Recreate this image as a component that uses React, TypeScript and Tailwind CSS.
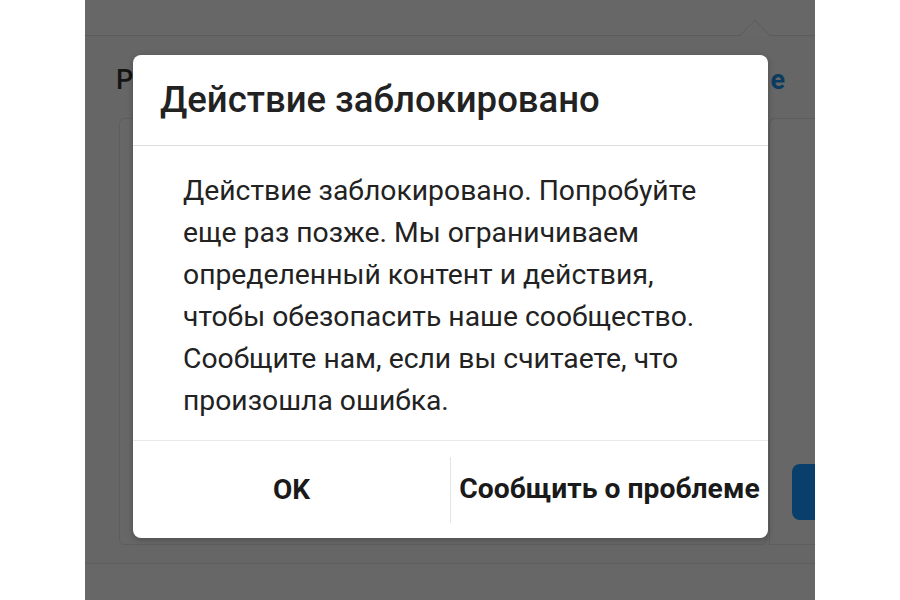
const bodyLines = [
  'Действие заблокировано. Попробуйте',
  'еще раз позже. Мы ограничиваем',
  'определенный контент и действия,',
  'чтобы обезопасить наше сообщество.',
  'Сообщите нам, если вы считаете, что',
  'произошла ошибка.',
]

export default function App() {
  return (
    <div
      className="flex h-[600px] w-[900px] bg-white"
      style={{ fontFamily: 'Roboto, "Noto Sans", sans-serif' }}
    >
      <div className="w-[85px] shrink-0 bg-white" />

      {/* dimmed page behind the dialog */}
      <div className="relative flex w-[730px] shrink-0 flex-col overflow-hidden bg-[#666666]">
        <div className="relative h-[36px] shrink-0 border-b border-[#5c5c5c] bg-[#676767]">
          <svg className="absolute left-[654px] top-[18px]" width="32" height="19" viewBox="0 0 32 19">
            <path d="M0 18.5 L16 2 L32 18.5" fill="#676767" stroke="#5c5c5c" strokeWidth="1" />
          </svg>
        </div>

        <div className="flex h-[82px] shrink-0 items-start justify-between pl-[31px] pr-[30px] pt-[30px]">
          <span className="text-[27px] font-medium leading-[28px] text-[#141414]">Р</span>
          <span className="text-[27px] font-bold leading-[28px] text-[#0b3c60]">е</span>
        </div>

        <div className="flex h-[427px] shrink-0 gap-[2px] pl-[34px]">
          <div className="flex-1 rounded-[6px] border border-[#5d5d5d] bg-[#676767]" />
          <div className="flex w-[46px] items-end rounded-tl-[6px] border border-r-0 border-[#5d5d5d] bg-[#676767] pb-[24px] pl-[22px]">
            <div className="h-[56px] w-[30px] rounded-l-[8px] bg-[#0b3f6b]" />
          </div>
        </div>

        <div className="mt-[18px] flex-1 border-t border-[#5d5d5d] bg-[#676767]" />

        {/* dialog */}
        <div className="absolute left-[48px] top-[55px] flex h-[483px] w-[635px] flex-col overflow-hidden rounded-[8px] bg-white shadow-[0_2px_6px_rgba(0,0,0,0.25)]">
          <div className="flex h-[91px] shrink-0 items-center border-b border-[#dcdcdc] pl-[27px]">
            <h1 className="text-[36.5px] font-medium leading-none text-[#222222]">Действие заблокировано</h1>
          </div>

          <div className="flex flex-1 items-center pl-[50px] pt-[6px]">
            <p className="text-[28.3px] leading-[42px] text-[#222222]">
              {bodyLines.map(line => (
                <span key={line} className="block whitespace-nowrap">{line}</span>
              ))}
            </p>
          </div>

          <div className="flex h-[98px] shrink-0 items-center border-t border-[#e8e8e8]">
            <button className="flex h-full w-[317px] items-center justify-center text-[28px] font-bold text-[#1a1a1a]">
              OK
            </button>
            <div className="h-[66px] w-px bg-[#e4e4e4]" />
            <button className="flex h-full flex-1 items-center justify-center whitespace-nowrap text-[28.3px] font-bold text-[#1a1a1a]">
              Сообщить о проблеме
            </button>
          </div>
        </div>
      </div>

      <div className="w-[85px] shrink-0 bg-white" />
    </div>
  )
}
